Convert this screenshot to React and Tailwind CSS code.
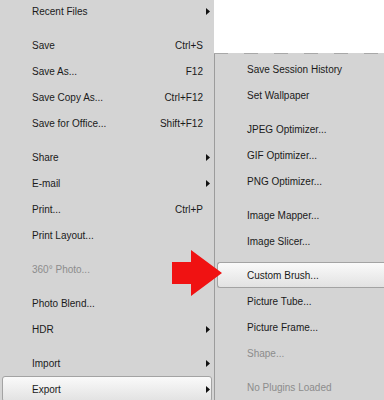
import React from "react";

const mainItems = [
  { label: "Recent Files", sub: true },
  { sep: true },
  { label: "Save", key: "Ctrl+S" },
  { label: "Save As...", key: "F12" },
  { label: "Save Copy As...", key: "Ctrl+F12" },
  { label: "Save for Office...", key: "Shift+F12" },
  { sep: true },
  { label: "Share", sub: true },
  { label: "E-mail", sub: true },
  { label: "Print...", key: "Ctrl+P" },
  { label: "Print Layout..." },
  { sep: true },
  { label: "360° Photo...", disabled: true },
  { sep: true },
  { label: "Photo Blend..." },
  { label: "HDR", sub: true },
  { sep: true },
  { label: "Import", sub: true },
  { label: "Export", sub: true, active: true },
];

const exportItems = [
  { label: "Save Session History" },
  { label: "Set Wallpaper" },
  { sep: true },
  { label: "JPEG Optimizer..." },
  { label: "GIF Optimizer..." },
  { label: "PNG Optimizer..." },
  { sep: true },
  { label: "Image Mapper..." },
  { label: "Image Slicer..." },
  { sep: true },
  { label: "Custom Brush...", active: true },
  { label: "Picture Tube..." },
  { label: "Picture Frame..." },
  { label: "Shape...", disabled: true },
  { sep: true },
  { label: "No Plugins Loaded", disabled: true },
];

const SubArrow = () => (
  <svg width="4" height="7" viewBox="0 0 4 7" className="shrink-0">
    <path d="M0 0 L4 3.5 L0 7 Z" fill="#111" />
  </svg>
);

const Separator = ({ inset }) => (
  <div className="h-2 flex items-center">
    <div className={`h-px bg-[#a9a9a9] ${inset}`} />
  </div>
);

const MainRow = ({ item }) => (
  <div
    className={`h-[26px] flex items-center ${
      item.active
        ? "mx-[2px] pl-[29px] pr-[1px] rounded-[3px] border border-[#a3a3a3] bg-gradient-to-b from-[#fafafa] to-[#e2e2e2]"
        : "pl-[32px] pr-[4px]"
    }`}
  >
    <span className={`flex-1 ${item.disabled ? "text-[#8c8c8c]" : "text-[#1a1a1a]"}`}>
      {item.label}
    </span>
    {item.key && <span className="text-[#1a1a1a] mr-[7px]">{item.key}</span>}
    {item.sub && <SubArrow />}
  </div>
);

const SubRow = ({ item }) => (
  <div
    className={`h-[26px] flex items-center ${
      item.active
        ? "ml-[2px] pl-[29px] rounded-l-[3px] border border-r-0 border-[#a3a3a3] bg-gradient-to-b from-[#fafafa] to-[#e2e2e2]"
        : "pl-[32px]"
    }`}
  >
    <span className={item.disabled ? "text-[#8c8c8c]" : "text-[#1a1a1a]"}>{item.label}</span>
  </div>
);

const RedArrow = () => (
  <svg
    width="52"
    height="50"
    viewBox="0 0 52 50"
    className="absolute left-[171px] top-[249px]"
  >
    <path d="M1 13 H20 V1 L51 24 L20 47 V35 H1 Z" fill="#f01212" />
  </svg>
);

export default function App() {
  return (
    <div
      className="relative w-[384px] h-[400px] overflow-hidden flex bg-white text-[10px]"
      style={{ fontFamily: '"Liberation Sans", Arial, sans-serif' }}
    >
      <div className="w-[214px] h-full bg-[#d4d4d4] flex flex-col">
        <div className="-mt-[2px] flex flex-col">
          {mainItems.map((item, i) =>
            item.sep ? (
              <Separator key={i} inset="ml-[14px] mr-[11px]" />
            ) : (
              <MainRow key={i} item={item} />
            )
          )}
        </div>
      </div>

      <div className="flex-1 flex flex-col">
        <div className="h-[54px] bg-white" />
        <div className="h-px bg-[repeating-linear-gradient(to_right,#a8a8a8_0_14px,#d4d4d4_14px_30px)]" />
        <div className="flex-1 bg-[#d4d4d4] border-l border-[#9c9c9c] pt-[2px] flex flex-col">
          {exportItems.map((item, i) =>
            item.sep ? (
              <Separator key={i} inset="ml-[14px] mr-[8px]" />
            ) : (
              <SubRow key={i} item={item} />
            )
          )}
        </div>
      </div>

      <RedArrow />
    </div>
  );
}
